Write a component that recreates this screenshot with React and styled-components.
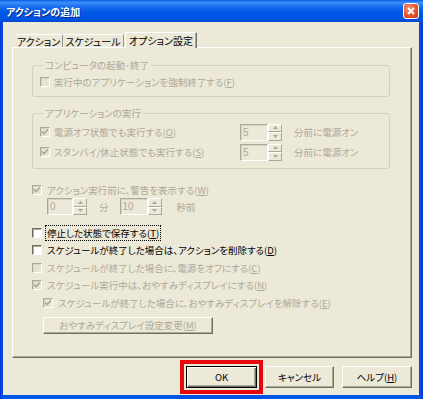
import React from 'react';
import styled, { createGlobalStyle } from 'styled-components';

const GlobalStyle = createGlobalStyle`
  html, body {
    margin: 0;
    padding: 0;
  }
  body {
    width: 423px;
    height: 399px;
    overflow: hidden;
    font-family: "Noto Sans CJK JP", "Noto Sans", sans-serif;
    font-size: 9.5px;
    font-feature-settings: "palt";
    color: #000;
  }
`;

const DISABLED = '#aca899';
const FACE = '#ece9d8';

const Window = styled.div`
  width: 423px;
  height: 399px;
  display: flex;
  flex-direction: column;
  background: linear-gradient(90deg, #0831d9 0, #0055e5 3px, #0055e5 419px, #0831d9 100%);
`;

const TitleBar = styled.div`
  height: 22px;
  flex: none;
  display: flex;
  align-items: center;
  justify-content: space-between;
  padding: 0 4px 0 6px;
  background: linear-gradient(
    180deg,
    #0a5fe8 0%,
    #3d8ff7 12%,
    #1a6ef0 30%,
    #0058e6 55%,
    #0055e5 80%,
    #0049d4 100%
  );
`;

const Title = styled.span`
  color: #fff;
  font-weight: bold;
  font-size: 10px;
  text-shadow: 1px 1px 0 #0a2a8a;
`;

const CloseButton = styled.div`
  width: 14px;
  height: 14px;
  border: 1px solid #fff;
  border-radius: 3px;
  background: radial-gradient(circle at 35% 30%, #f0906f 0%, #e2552f 55%, #c23a17 100%);
  display: flex;
  align-items: center;
  justify-content: center;
`;

const Client = styled.div`
  flex: 1;
  margin: 0 4px 4px 3px;
  background: ${FACE};
  padding: 10px 7px 0 9px;
  display: flex;
  flex-direction: column;
`;

const TabStrip = styled.div`
  display: flex;
  align-items: flex-end;
  height: 15px;
  padding-left: 3px;
  position: relative;
  z-index: 1;
`;

const Tab = styled.div`
  width: ${p => p.$width}px;
  height: ${p => (p.$active ? 16 : 13)}px;
  margin: ${p => (p.$active ? '0 0 -1px 1px' : '0')};
  box-sizing: border-box;
  display: flex;
  align-items: center;
  justify-content: center;
  background: ${FACE};
  border-top: 1px solid #fff;
  border-left: ${p => (p.$active ? '1px solid #fff' : '0')};
  border-right: 1px solid ${p => (p.$active ? '#716f64' : '#919b9c')};
  box-shadow: ${p => (p.$active ? 'inset -1px 0 0 #aca899' : 'none')};
  padding-bottom: ${p => (p.$active ? 1 : 0)}px;
  font-size: 10px;
  white-space: nowrap;
`;

const Panel = styled.div`
  height: 311px;
  box-sizing: border-box;
  border: 1px solid;
  border-color: #fff #716f64 #716f64 #fff;
  box-shadow: inset -1px -1px 0 #aca899;
  padding: 11px 21px 0 19px;
  display: flex;
  flex-direction: column;
`;

const Group = styled.fieldset`
  margin: ${p => p.$top || 0}px 0 0 0;
  padding: ${p => p.$pt}px 8px ${p => p.$pb}px 7px;
  border: 1px solid #d0d0bf;
  border-radius: 3px;
  min-inline-size: 0;
`;

const Legend = styled.legend`
  margin-left: 3px;
  padding: 0 2px;
  line-height: 12px;
  height: 12px;
  color: ${DISABLED};
  white-space: nowrap;
`;

const Row = styled.div`
  display: flex;
  align-items: center;
  height: ${p => p.$h || 18}px;
  margin-top: ${p => p.$top || 0}px;
  padding-left: ${p => p.$indent || 0}px;
  white-space: nowrap;
`;

const SpinGrid = styled.div`
  display: grid;
  grid-template-columns: 189px 42px auto;
  grid-auto-rows: 20px;
  align-items: center;
  column-gap: 11px;
`;

const CheckLabel = styled.div`
  display: flex;
  align-items: center;
  gap: ${p => p.$gap || 4}px;
  white-space: nowrap;
`;

const Box = styled.span`
  width: 10px;
  height: 10px;
  flex: none;
  box-sizing: border-box;
  border: 1px solid;
  border-color: ${p => (p.$disabled ? '#aca899 #fff #fff #aca899' : '#716f64 #fff #fff #716f64')};
  background: ${p => (p.$disabled ? '#e6e3d3' : '#fff')};
  box-shadow: inset 1px 1px 0 ${p => (p.$disabled ? '#d6d3c3' : '#aca899')};
  display: flex;
  align-items: center;
  justify-content: center;
`;

const Text = styled.span`
  color: ${p => (p.$disabled ? DISABLED : '#000')};
  line-height: 14px;
  padding: 0 1px;
  outline: ${p => (p.$focus ? '1px dotted #000' : 'none')};
  outline-offset: 0;
`;

const Spin = styled.div`
  display: flex;
  width: ${p => p.$w + 14}px;
  height: 17px;
`;

const Field = styled.div`
  flex: 1;
  box-sizing: border-box;
  border: 1px solid;
  border-color: #aca899 #fff #fff #aca899;
  box-shadow: inset 1px 1px 0 #d6d3c3;
  padding-left: 2px;
  font-family: "Liberation Sans", sans-serif;
  font-size: 10px;
  line-height: 15px;
  color: ${DISABLED};
`;

const Arrows = styled.div`
  width: 14px;
  display: flex;
  flex-direction: column;
`;

const ArrowBtn = styled.div`
  flex: 1;
  box-sizing: border-box;
  border: 1px solid;
  border-color: #fff #aca899 #aca899 #fff;
  display: flex;
  align-items: center;
  justify-content: center;
`;

const DialogButton = styled.div`
  width: ${p => p.$w}px;
  height: ${p => p.$h}px;
  box-sizing: border-box;
  border: 1px solid;
  border-color: ${p => (p.$default ? '#000' : '#fff #716f64 #716f64 #fff')};
  box-shadow: ${p =>
    p.$default
      ? 'inset 1px 1px 0 #fff, inset -1px -1px 0 #716f64, inset -2px -2px 0 #aca899'
      : 'inset -1px -1px 0 #aca899'};
  background: ${FACE};
  display: flex;
  align-items: center;
  justify-content: center;
  color: ${p => (p.$disabled ? DISABLED : '#000')};
  outline: ${p => (p.$marked ? '4px solid #e8070a' : 'none')};
  outline-offset: 2px;
  white-space: nowrap;
`;

const ButtonBar = styled.div`
  display: flex;
  justify-content: flex-end;
  gap: 8px;
  margin-top: 8px;
`;

const Spacer = styled.span`
  width: ${p => p.$w}px;
  flex: none;
`;

const Check = ({ checked, disabled }) => (
  <Box $disabled={disabled}>
    {checked && (
      <svg width="8" height="8" viewBox="0 0 8 8">
        <path d="M1 3.5 L3 5.5 L7 1.5" fill="none" stroke={disabled ? '#aca899' : '#21a121'} strokeWidth="1.6" />
      </svg>
    )}
  </Box>
);

const Arrow = ({ up }) => (
  <svg width="5" height="3" viewBox="0 0 5 3">
    <path d={up ? 'M0 3 L2.5 0 L5 3 Z' : 'M0 0 L2.5 3 L5 0 Z'} fill="#aca899" />
  </svg>
);

const SpinBox = ({ value, w }) => (
  <Spin $w={w}>
    <Field>{value}</Field>
    <Arrows>
      <ArrowBtn><Arrow up /></ArrowBtn>
      <ArrowBtn><Arrow /></ArrowBtn>
    </Arrows>
  </Spin>
);

const Option = ({ checked, disabled, focus, gap, children }) => (
  <CheckLabel $gap={gap}>
    <Check checked={checked} disabled={disabled} />
    <Text $disabled={disabled} $focus={focus}>{children}</Text>
  </CheckLabel>
);

export default function App() {
  return (
    <Window>
      <GlobalStyle />
      <TitleBar>
        <Title>アクションの追加</Title>
        <CloseButton>
          <svg width="8" height="8" viewBox="0 0 8 8">
            <path d="M1 1 L7 7 M7 1 L1 7" stroke="#fff" strokeWidth="1.8" />
          </svg>
        </CloseButton>
      </TitleBar>
      <Client>
        <TabStrip>
          <Tab $width={48}>アクション</Tab>
          <Tab $width={61}>スケジュール</Tab>
          <Tab $width={72} $active>オプション設定</Tab>
        </TabStrip>
        <Panel>
          <Group $pt={2} $pb={5}>
            <Legend>コンピュータの起動･終了</Legend>
            <Row>
              <Option disabled gap={3}>実行中のアプリケーションを強制終了する(<u>F</u>)</Option>
            </Row>
          </Group>
          <Group $top={10} $pt={3} $pb={6}>
            <Legend>アプリケーションの実行</Legend>
            <SpinGrid>
              <Option checked disabled gap={3}>電源オフ状態でも実行する(<u>O</u>)</Option>
              <SpinBox value="5" w={28} />
              <Text $disabled>分前に電源オン</Text>
              <Option checked disabled gap={3}>スタンバイ/休止状態でも実行する(<u>S</u>)</Option>
              <SpinBox value="5" w={28} />
              <Text $disabled>分前に電源オン</Text>
            </SpinGrid>
          </Group>
          <Row $h={16} $top={13}>
            <Option checked disabled>アクション実行前に、警告を表示する(<u>W</u>)</Option>
          </Row>
          <Row $h={17} $indent={15}>
            <SpinBox value="0" w={26} />
            <Spacer $w={11} />
            <Text $disabled>分</Text>
            <Spacer $w={10} />
            <SpinBox value="10" w={28} />
            <Spacer $w={14} />
            <Text $disabled>秒前</Text>
          </Row>
          <Row $h={17.5} $top={9}>
            <Option focus>停止した状態で保存する(<u>T</u>)</Option>
          </Row>
          <Row $h={17.5}>
            <Option>スケジュールが終了した場合は、アクションを削除する(<u>D</u>)</Option>
          </Row>
          <Row $h={17.5}>
            <Option disabled>スケジュールが終了した場合に、電源をオフにする(<u>C</u>)</Option>
          </Row>
          <Row $h={17.5}>
            <Option checked disabled>スケジュール実行中は、おやすみディスプレイにする(<u>N</u>)</Option>
          </Row>
          <Row $h={17.5} $indent={11}>
            <Option checked disabled>スケジュールが終了した場合に、おやすみディスプレイを解除する(<u>E</u>)</Option>
          </Row>
          <Row $h={17} $top={5} $indent={11}>
            <DialogButton $w={170} $h={17} $disabled>おやすみディスプレイ設定変更(<u>M</u>)</DialogButton>
          </Row>
        </Panel>
        <ButtonBar>
          <DialogButton $w={71} $h={22} $default $marked>OK</DialogButton>
          <DialogButton $w={69} $h={22}>キャンセル</DialogButton>
          <DialogButton $w={70} $h={22}>ヘルプ(<u>H</u>)</DialogButton>
        </ButtonBar>
      </Client>
    </Window>
  );
}
